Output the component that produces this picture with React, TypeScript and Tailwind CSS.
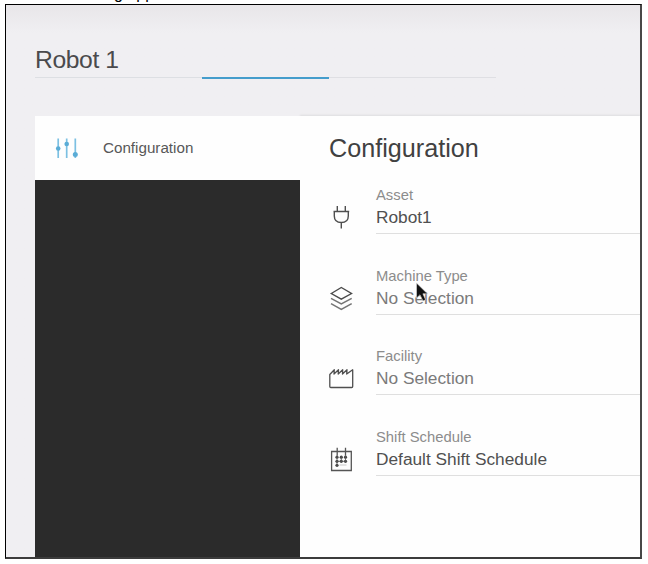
import type { ReactNode } from "react";

function SlidersIcon() {
  return (
    <svg width="24" height="22" viewBox="0 0 24 22" fill="none" stroke="#7cc0e2" strokeWidth="1.7">
      <path d="M3.2 1.500v19.500M11.700 1.500v19.500M20.300 1.500v19.500" />
      <g fill="#5aacd6" stroke="none">
        <circle cx="3.2" cy="11.500" r="2.300" />
        <circle cx="11.700" cy="7" r="2.300" />
        <circle cx="20.300" cy="17.500" r="2.500" />
      </g>
    </svg>
  );
}

function PlugIcon() {
  return (
    <svg width="26" height="26" viewBox="0 0 26 26" fill="none" stroke="#4f4f4f" strokeWidth="1.4">
      <path d="M8.300 1v5.500M16.300 1v5.500M4.500 6.500h15.700M5.300 6.500v4.500c0 4.500 2.500 6.500 7 6.500s7-2 7-6.500V6.500M12.300 17.500v6" />
    </svg>
  );
}

function LayersIcon() {
  return (
    <svg width="26" height="26" viewBox="0 0 26 26" fill="none" stroke="#4b4b4b" strokeWidth="1.4">
      <path d="M2.300 7.500 12.300 1.500l10.200 6-10.200 5.700z" />
      <path d="M2 12.300 12.300 18l10.400-5.700M2 17.600l10.300 5.900 10.400-5.900" strokeWidth="1.500" stroke="#757575" />
    </svg>
  );
}

function FactoryIcon() {
  return (
    <svg width="26" height="26" viewBox="0 0 26 26" fill="none" stroke="#4f4f4f" strokeWidth="1.300" strokeLinejoin="round">
      <path d="M.800 20.500V8.500L5.300 3.800 5 8l4.500-4.200L9.200 8l4.500-4.200L13.500 8 18 3.800 17.700 8l6-4.200v16.700q0 1-1 1H1.800q-1 0-1-1z" />
    </svg>
  );
}

function CalendarIcon() {
  return (
    <svg width="26" height="26" viewBox="0 0 26 26" fill="none" stroke="#555" strokeWidth="1.300">
      <path d="M2.600 4.500h19.700v19H2.600zM8.200.800v8M16.500 .800v8" />
      <g fill="#444" stroke="none">
        {[10.200, 14.300, 18.300].map((cy) =>
          [8, 12.300, 16.500].map((cx) =>
            cy === 18.300 && cx > 9 ? null : <circle key={`${cx}-${cy}`} cx={cx} cy={cy} r="1.600" />
          )
        )}
      </g>
      <path d="M8 9v10M7 14.300h11M12.300 9.500v5M16.500 9v6" strokeWidth=".8" />
      <path d="M10.500 18h7" strokeWidth=".8" stroke="#bbb" />
    </svg>
  );
}

interface FieldProps {
  icon: ReactNode;
  label: string;
  value: string;
  muted?: boolean;
}

function Field({ icon, label, value, muted = false }: FieldProps) {
  return (
    <div className="flex h-[80.600px]">
      <div className="w-[47px] shrink-0 pt-[19px]">{icon}</div>
      <div className="-mt-px h-[49px] flex-1 border-b border-[#dfdfdf]">
        <div className="h-[21px] text-[14.800px] leading-[20px] text-[#8c8c8c]">{label}</div>
        <div className={`text-[17.300px] leading-[22px] ${muted ? "text-[#7a7a7a]" : "text-[#505050]"}`}>{value}</div>
      </div>
    </div>
  );
}

export default function App() {
  return (
    <div className="relative h-[564px] w-[648px] overflow-hidden bg-white pl-[5px] pt-[4px] font-['Liberation_Sans',Arial,sans-serif]">
      <div className="absolute left-[114px] top-[-15px] whitespace-nowrap text-[16px] leading-[18px] text-black">g app</div>
      <div className="relative flex h-[555px] w-[637px] flex-col overflow-hidden border-b-2 border-l border-r-2 border-t border-b-[#3c3c3c] border-l-black border-r-[#484848] border-t-black bg-linear-to-b from-[#e8e6e9] to-[#f0eff2] to-[28px] pl-[29px]">
        <header className="h-[111px] pt-[41px]">
          <h1 className="h-[30px] text-[24.700px] leading-[28px] tracking-[-0.400px] text-[#4a4a4c]">Robot 1</h1>
          <div className="flex h-[3px] w-[461px] items-center">
            <div className="h-px w-[167px] bg-[#dddfe3]" />
            <div className="h-[2px] w-[127px] bg-[#459dcc]" />
            <div className="h-px flex-1 bg-[#dfdfe3]" />
          </div>
        </header>
        <div className="flex flex-1">
          <nav className="relative z-10 flex w-[265px] shrink-0 flex-col bg-[#2b2b2b]">
            <div className="flex h-[64px] items-center bg-[#fefefe] pl-[20px]">
              <SlidersIcon />
              <span className="ml-[24px] text-[15.200px] leading-[20px] text-[#585858]">Configuration</span>
            </div>
          </nav>
          <main className="flex-1 bg-[#fefefe] pl-[29px] shadow-[0_-1px_2px_#dddddf]">
            <h2 className="h-[70px] pt-[18px] text-[25.200px] leading-[28px] text-[#414141]">Configuration</h2>
            <Field icon={<PlugIcon />} label="Asset" value="Robot1" />
            <Field icon={<LayersIcon />} label="Machine Type" value="No Selection" muted />
            <Field icon={<FactoryIcon />} label="Facility" value="No Selection" muted />
            <Field icon={<CalendarIcon />} label="Shift Schedule" value="Default Shift Schedule" />
          </main>
        </div>
      </div>
      <svg className="absolute left-[415px] top-[282px]" width="14" height="21" viewBox="0 0 14 21">
        <path d="M1.500 1v15l3.500-3.200L8 19l2.600-1.200-2.700-6H12.500z" fill="#111" stroke="#ddd" strokeWidth=".6" />
      </svg>
    </div>
  );
}
